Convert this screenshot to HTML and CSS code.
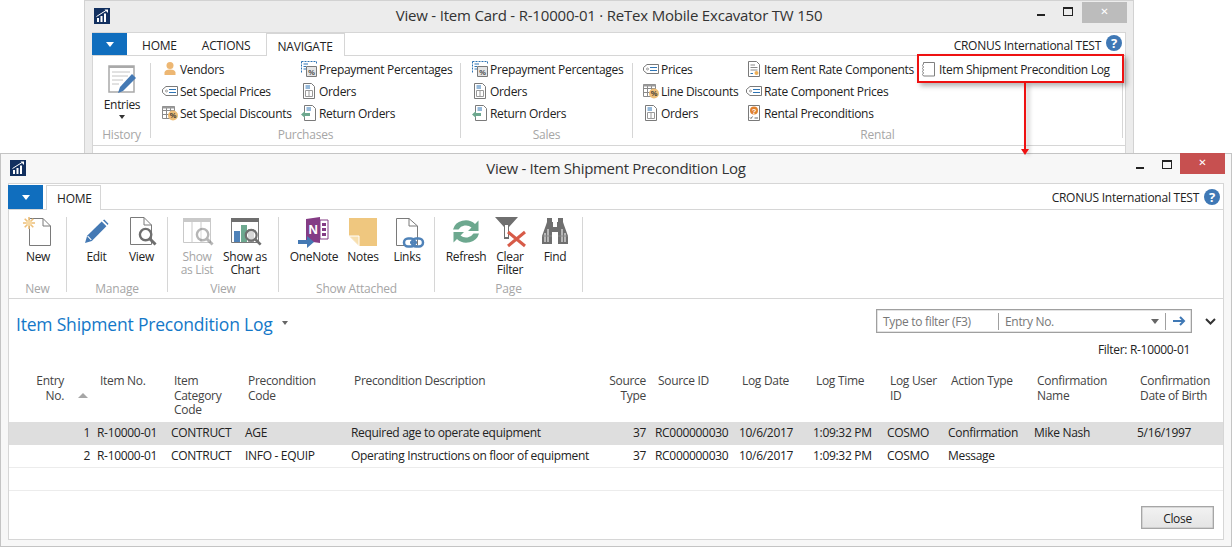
FILE: index.html
```html
<!DOCTYPE html>
<html lang="en">
<head>
<meta charset="utf-8">
<title>View - Item Shipment Precondition Log</title>
<link rel="stylesheet" href="styles.css">
</head>
<body>
<svg class="defs" width="0" height="0" aria-hidden="true">
  <defs>
    <symbol id="logo" viewBox="0 0 16 16"><rect width="16" height="16" fill="#12305f"/><path d="M3 14V10H5V14ZM6.500 14V8H8.500V14ZM10 14V5.500H12V14Z" fill="#fff"/><path d="M2.500 8.500 8 5 12 2.500" fill="none" stroke="#fff" stroke-width="1"/><path d="M10.500 1.500H14V5Z" fill="#fff"/></symbol>
    <symbol id="tag" viewBox="0 0 16 16"><path d="M4 3.500H15.500V12.500H4L.5 9.500V6.500Z" fill="#fff" stroke="#7a7a7a"/><circle cx="4.500" cy="8" r="1" fill="none" stroke="#7a7a7a" stroke-width=".7"/><path d="M7 6.500H14M7 9.500H14" stroke="#2f75b5"/></symbol>
    <symbol id="disc" viewBox="0 0 16 16"><path d="M.5 1.500H12.500V13.500H.5ZM.5 5.500H12.500M.5 9.500H12.500M4.500 1.500V13.500M8.500 1.500V13.500" fill="#fff" stroke="#8a8a8a"/><path d="M.5 1.500H12.500V3.500H.5Z" fill="#9a9a9a"/><circle cx="11" cy="10.500" r="5" fill="#edbe78"/><text x="11" y="13" font-size="7.500" font-weight="700" text-anchor="middle" fill="#333" font-family="Liberation Sans">%</text></symbol>
    <symbol id="prep" viewBox="0 0 16 16"><path d="M.5.500H15.500M.5.500V11.500M15.500.500V3" fill="none" stroke="#2f75b5" stroke-dasharray="2 1"/><path d="M2.500 3H7M2.500 5.500H5M2.500 8H5" stroke="#2f75b5"/><path d="M5.500 5.500H15.500V15.500H5.500Z" fill="#e4e4e4" stroke="#7a7a7a"/><text x="10.500" y="13.500" font-size="7.500" font-weight="700" text-anchor="middle" fill="#444" font-family="Liberation Sans">%</text></symbol>
    <symbol id="order" viewBox="0 0 16 16"><path d="M2.500.5H10.500L13.500 3.500V15.500H2.500Z" fill="#fff" stroke="#7a7a7a"/><path d="M4.500 3H9M4.500 5H9" stroke="#2f75b5"/><path d="M4.500 7.500H11.500V13.500H4.500ZM8 7.500V13.500" fill="none" stroke="#9a9a9a"/></symbol>
    <symbol id="ret" viewBox="0 0 16 16"><path d="M3.500.5H11.500L14.500 3.500V15.500H3.500Z" fill="#fff" stroke="#7a7a7a"/><path d="M5.500 3H10M5.500 5H10" stroke="#2f75b5"/><path d="M0 9.500 4 6V8H9V11H4V13Z" fill="#6da88f"/></symbol>
    <symbol id="rate" viewBox="0 0 16 16"><path d="M2.500.5H10.500L13.500 3.500V15.500H2.500Z" fill="#fff" stroke="#7a7a7a"/><path d="M4.500 4H9M4.500 6.500H11.500M4.500 9H11.500" stroke="#8a8a8a"/><path d="M4.500 12.500H7" stroke="#2f75b5"/><circle cx="10.500" cy="12" r="2" fill="#edb05a"/></symbol>
    <symbol id="rent" viewBox="0 0 16 16"><path d="M2.500.5H13.500V15.500H2.500Z" fill="#fff" stroke="#7a7a7a"/><circle cx="8" cy="5.500" r="4" fill="#e0812e"/><text x="8" y="8.500" font-size="7.500" font-weight="700" text-anchor="middle" fill="#fff" font-family="Liberation Sans">?</text><path d="M4 12.500 5 13.500 6.500 11.500M8.500 13H12" fill="none" stroke="#666"/></symbol>
    <symbol id="log" viewBox="0 0 14 16"><path d="M2.500 1.500H13.500V15H2.500L1.500 13.500 2.500 12 1.500 10.500 2.500 9 1.500 7.500 2.500 6 1.500 4.500 2.500 3Z" fill="#fff" stroke="#808080"/></symbol>
    <symbol id="pencil" viewBox="0 0 24 24"><path d="M1 23 3 16 17 2.500 21.500 7 7.500 21Z" fill="#4479b4"/><path d="M18.200 1.300 19.500.5 23.500 4.500 22.700 5.800Z" fill="#4479b4"/><path d="M3.500 16.500 7 20" stroke="#fff" stroke-width="1"/></symbol>
    <symbol id="lens" viewBox="0 0 20 20"><circle cx="8" cy="8" r="6" fill="#fff" fill-opacity=".55" stroke="#6f6f6f" stroke-width="2.500"/><path d="M12.500 12.500 18.500 18.500" stroke="#6f6f6f" stroke-width="3"/></symbol>
  </defs>
</svg>

<section class="win win-back">
  <header class="title">
    <svg class="logo"><use href="#logo"/></svg>
    <h2 class="title-text">View - Item Card - R-10000-01 · ReTex Mobile Excavator TW 150</h2>
    <div class="ctl">
      <span class="ctl-min"></span><span class="ctl-max"></span><span class="ctl-close ctl-close-off">✕</span>
    </div>
  </header>
  <div class="panel">
    <div class="tabs">
      <span class="menu"><i class="caret-w"></i></span>
      <span class="tab tab-first">HOME</span><span class="tab">ACTIONS</span><span class="tab tab-on">NAVIGATE</span>
      <span class="company">CRONUS International TEST</span><span class="help">?</span>
    </div>
    <div class="ribbon ribbon-back">
      <div class="grp g-history">
        <div class="big entries">
          <svg class="ic-entries" viewBox="0 0 28 30"><path d="M1 1H26V27H1Z" fill="#fff" stroke="#a9a9a9" stroke-width="1.500"/><path d="M1 1H26V3H1Z" fill="#a9a9a9"/><path d="M4 7H22M4 11H20M4 15H15M4 19H11" stroke="#c4c4c4"/><path d="M10 28 12 22 24 9 28 13 15 26Z" fill="#4479b4"/></svg>
          <span>Entries</span><i class="caret-k"></i>
        </div>
        <div class="glabel">History</div>
      </div>
      <div class="grp g-purch">
        <div class="cols">
          <div class="col c-139">
            <div class="li"><svg class="i16" viewBox="0 0 16 16"><circle cx="8" cy="4.500" r="3.500" fill="#edb773"/><path d="M2.500 14V11.500Q3 8.500 8 8.500T13.500 11.500V14Z" fill="#edb773"/></svg><span>Vendors</span></div>
            <div class="li"><svg class="i16"><use href="#tag"/></svg><span>Set Special Prices</span></div>
            <div class="li"><svg class="i16"><use href="#disc"/></svg><span>Set Special Discounts</span></div>
          </div>
          <div class="col">
            <div class="li"><svg class="i16"><use href="#prep"/></svg><span>Prepayment Percentages</span></div>
            <div class="li"><svg class="i16"><use href="#order"/></svg><span>Orders</span></div>
            <div class="li"><svg class="i16"><use href="#ret"/></svg><span>Return Orders</span></div>
          </div>
        </div>
        <div class="glabel">Purchases</div>
      </div>
      <div class="grp g-sales">
        <div class="cols">
          <div class="col">
            <div class="li"><svg class="i16"><use href="#prep"/></svg><span>Prepayment Percentages</span></div>
            <div class="li"><svg class="i16"><use href="#order"/></svg><span>Orders</span></div>
            <div class="li"><svg class="i16"><use href="#ret"/></svg><span>Return Orders</span></div>
          </div>
        </div>
        <div class="glabel">Sales</div>
      </div>
      <div class="grp g-rental">
        <div class="cols">
          <div class="col c-103">
            <div class="li"><svg class="i16"><use href="#tag"/></svg><span>Prices</span></div>
            <div class="li"><svg class="i16"><use href="#disc"/></svg><span>Line Discounts</span></div>
            <div class="li"><svg class="i16"><use href="#order"/></svg><span>Orders</span></div>
          </div>
          <div class="col c-175">
            <div class="li"><svg class="i16"><use href="#rate"/></svg><span>Item Rent Rate Components</span></div>
            <div class="li"><svg class="i16"><use href="#tag"/></svg><span>Rate Component Prices</span></div>
            <div class="li"><svg class="i16"><use href="#rent"/></svg><span>Rental Preconditions</span></div>
          </div>
          <div class="col">
            <div class="li li-log"><svg class="i14"><use href="#log"/></svg><span>Item Shipment Precondition Log</span></div>
          </div>
        </div>
        <div class="glabel">Rental</div>
      </div>
    </div>
  </div>
</section>

<section class="win win-front">
  <header class="title title-front">
    <svg class="logo"><use href="#logo"/></svg>
    <h1 class="title-text">View - Item Shipment Precondition Log</h1>
    <div class="ctl">
      <span class="ctl-min"></span><span class="ctl-max"></span><span class="ctl-close">✕</span>
    </div>
  </header>
  <div class="panel panel-front">
    <div class="tabs tabs-front">
      <span class="menu"><i class="caret-w"></i></span>
      <span class="tab tab-on tab-home">HOME</span>
      <span class="company">CRONUS International TEST</span><span class="help">?</span>
    </div>
    <div class="ribbon ribbon-front">
      <div class="grp f-new">
        <div class="btns">
          <div class="rb w46">
            <svg class="ic" viewBox="0 0 32 30"><path d="M7.500 1.500H21L28.500 9V28.500H7.500Z" fill="#fff" stroke="#7a7a7a" stroke-width="1"/><path d="M21 1.500V9H28.500" fill="none" stroke="#7a7a7a"/><g stroke="#edbe78" stroke-width="1.600"><path d="M7 0V12M1 6H13M2.700 1.700 11.300 10.300M11.300 1.700 2.700 10.300"/></g><circle cx="7" cy="6" r="3" fill="#f6d9a6"/></svg>
            <span>New</span>
          </div>
        </div>
        <div class="glabel">New</div>
      </div>
      <div class="grp f-manage">
        <div class="btns">
          <div class="rb w45"><svg class="ic" viewBox="0 0 32 30"><use href="#pencil" x="3" y="2" width="25" height="25"/></svg><span>Edit</span></div>
          <div class="rb w45"><svg class="ic" viewBox="0 0 32 30"><path d="M4.500 .5H18L25.500 8V27.500H4.500Z" fill="#fff" stroke="#7a7a7a"/><path d="M18 .5V8H25.500" fill="none" stroke="#7a7a7a"/><use href="#lens" x="12" y="10" width="19" height="19"/></svg><span>View</span></div>
        </div>
        <div class="glabel">Manage</div>
      </div>
      <div class="grp f-view">
        <div class="btns">
          <div class="rb w48 off"><svg class="ic" viewBox="0 0 32 30"><path d="M2 1H30V5H2Z" fill="#c9c9c9"/><path d="M2.500 5V25.500H29.500V5M11 5V25.500M20 5V25.500" fill="none" stroke="#c9c9c9"/><g opacity=".5"><use href="#lens" x="14" y="10" width="19" height="19"/></g></svg><span>Show<br>as List</span></div>
          <div class="rb w48"><svg class="ic" viewBox="0 0 32 30"><path d="M2 1H30V5H2Z" fill="#6f6f6f"/><path d="M2.500 5V25.500H29.500V5" fill="none" stroke="#7a7a7a"/><path d="M5 14H11V25H5Z" fill="#4f82b8"/><path d="M12 8H18V25H12Z" fill="#6da88f"/><path d="M19 12H25V25H19Z" fill="#a9a9a9"/><use href="#lens" x="15" y="11" width="18" height="18"/></svg><span>Show as<br>Chart</span></div>
        </div>
        <div class="glabel">View</div>
      </div>
      <div class="grp f-attach">
        <div class="btns">
          <div class="rb w50"><svg class="ic" viewBox="0 0 32 30"><path d="M8 2 22 0V26L8 24Z" fill="#843c85"/><path d="M22 3H30V22H22Z" fill="#fff" stroke="#843c85"/><path d="M24 6H28V9H24ZM24 11H28V14H24ZM24 16H28V19H24Z" fill="#843c85"/><text x="15" y="17" font-size="13" font-weight="700" text-anchor="middle" fill="#fff" font-family="Liberation Sans">N</text><path d="M0 23H9V19L16 25 9 31V27H0Z" fill="#4479b4"/></svg><span>OneNote</span></div>
          <div class="rb w48"><svg class="ic" viewBox="0 0 32 30"><path d="M2 1H30V29H12L2 19Z" fill="#efc77f"/><path d="M2 19H12V29" fill="#fff" stroke="#fff"/><path d="M3 19.500H11.500V28" fill="#f7dfae"/></svg><span>Notes</span></div>
          <div class="rb w40"><svg class="ic" viewBox="0 0 32 30"><path d="M5.500 1.500H18L26.500 9V28.500H5.500Z" fill="#fff" stroke="#7a7a7a"/><path d="M18 1.500V9H26.500" fill="none" stroke="#7a7a7a"/><rect x="13" y="21.500" width="11" height="8" rx="4" fill="#fff" stroke="#4f82b8" stroke-width="2.500"/><rect x="21" y="21.500" width="11" height="8" rx="4" fill="none" stroke="#4f82b8" stroke-width="2.500"/><path d="M19 25.500H26" stroke="#4f82b8" stroke-width="2.500"/></svg><span>Links</span></div>
        </div>
        <div class="glabel">Show Attached</div>
      </div>
      <div class="grp f-page">
        <div class="btns">
          <div class="rb w44"><svg class="ic" viewBox="0 0 32 30"><path d="M3 12.500A13 12 0 0 1 25 7L28.500 3.500V14H18L21.500 10.500A8.500 8 0 0 0 8.500 12.500Z" fill="#6da88f"/><path d="M29 16.500A13 12 0 0 1 7 22L3.500 25.500V15H14L10.500 18.500A8.500 8 0 0 0 23.500 16.500Z" fill="#6da88f"/></svg><span>Refresh</span></div>
          <div class="rb w44"><svg class="ic" viewBox="0 0 32 30"><path d="M1 0H24L15 10V22L10 22V10Z" fill="#6f6f6f"/><path d="M11 8H14V20H11Z" fill="#fff"/><path d="M14 15 31 29M31 15 14 29" stroke="#d75b48" stroke-width="3"/></svg><span>Clear<br>Filter</span></div>
          <div class="rb w46"><svg class="ic" viewBox="0 0 32 30"><path d="M8 1H13V5H14V10H18V5H19V1H24V5L25 8 29 19V27H19V15H13V27H3V19L7 8 8 5Z" fill="#6f6f6f"/><path d="M6 16V25M9 12V25M23 12V25M26 16V25" stroke="#fff"/><path d="M3 19H13M19 19H29" stroke="#8a8a8a"/></svg><span>Find</span></div>
        </div>
        <div class="glabel">Page</div>
      </div>
    </div>
    <div class="body">
      <div class="head-row">
        <div class="heading"><span class="page-title">Item Shipment Precondition Log</span><i class="caret-g"></i></div>
        <div class="filter-wrap">
          <div class="filter">
            <span class="f-type">Type to filter (F3)</span>
            <span class="f-field">Entry No.</span>
            <i class="caret-g caret-f"></i>
            <span class="f-go"><svg width="14" height="10" viewBox="0 0 14 10"><path d="M1 5H12M8 1 12 5 8 9" fill="none" stroke="#3f78b5" stroke-width="2"/></svg></span>
          </div>
          <svg class="chev" width="11" height="7" viewBox="0 0 11 7"><path d="M1 1 5.500 5.500 10 1" fill="none" stroke="#333" stroke-width="2"/></svg>
        </div>
      </div>
      <div class="filter-note">Filter: R-10000-01</div>
      <div class="tbl">
        <div class="row thead">
          <div class="th th-entry">Entry<br>No.<i class="sort"></i></div>
          <div class="th">Item No.</div>
          <div class="th">Item<br>Category<br>Code</div>
          <div class="th">Precondition<br>Code</div>
          <div class="th">Precondition Description</div>
          <div class="th th-r">Source<br>Type</div>
          <div class="th">Source ID</div>
          <div class="th">Log Date</div>
          <div class="th">Log Time</div>
          <div class="th">Log User<br>ID</div>
          <div class="th">Action Type</div>
          <div class="th">Confirmation<br>Name</div>
          <div class="th">Confirmation<br>Date of Birth</div>
        </div>
        <div class="row tr sel">
          <div class="td td-no">1</div><div class="td">R-10000-01</div><div class="td">CONTRUCT</div><div class="td">AGE</div><div class="td">Required age to operate equipment</div><div class="td td-r">37</div><div class="td">RC000000030</div><div class="td">10/6/2017</div><div class="td">1:09:32 PM</div><div class="td">COSMO</div><div class="td">Confirmation</div><div class="td">Mike Nash</div><div class="td">5/16/1997</div>
        </div>
        <div class="row tr">
          <div class="td td-no">2</div><div class="td">R-10000-01</div><div class="td">CONTRUCT</div><div class="td">INFO - EQUIP</div><div class="td">Operating Instructions on floor of equipment</div><div class="td td-r">37</div><div class="td">RC000000030</div><div class="td">10/6/2017</div><div class="td">1:09:32 PM</div><div class="td">COSMO</div><div class="td">Message</div><div class="td"></div><div class="td"></div>
        </div>
        <div class="row tr empty"></div>
      </div>
      <div class="foot"><button class="close" type="button">Close</button></div>
    </div>
  </div>
</section>

<div class="callout"></div>
<div class="arrow"></div>
</body>
</html>
```
FILE: styles.css
```css
* { box-sizing: border-box; }
html, body { margin: 0; padding: 0; }
body {
  position: relative;
  width: 1232px;
  height: 548px;
  overflow: hidden;
  background: #fff;
  color: #222;
  font: 12px/15px "Open Sans", "Noto Sans", sans-serif;
  letter-spacing: -.31px;
}
.defs { position: absolute; }
h1, h2 { margin: 0; font-weight: 400; }
i { display: block; }
svg { display: block; flex: none; overflow: visible; }

/* windows */
.win { position: absolute; display: flex; flex-direction: column; }
.win-back { left: 84px; top: 0; width: 1050px; height: 153px; background: #ececec; border: 1px solid #d2d2d2; border-bottom: 0; padding: 0 7px; }
.win-front { left: 0; top: 153px; width: 1232px; height: 394px; background: #f7f7f7; border: 1px solid #c4c4c4; padding: 0 7px 6px; }

.title { position: relative; flex: none; height: 31px; display: flex; align-items: center; justify-content: center; }
.title-front { height: 29px; }
.title-text { font-size: 15px; letter-spacing: -.2px; color: #333; margin-top: -2px; }
.win-front .title-text { letter-spacing: -.3px; margin-top: 0; }
.logo { position: absolute; left: 2px; top: 7px; width: 16px; height: 16px; }
.title-front .logo { top: 6px; }
.ctl { position: absolute; right: -1px; top: 0; display: flex; align-items: flex-start; }
.ctl-min { width: 8px; height: 2px; background: #222; margin: 13px 18px 0 0; }
.ctl-max { width: 10px; height: 9px; border: 1px solid #222; border-top-width: 2px; margin: 6px 8px 0 0; }
.ctl-close { width: 45px; height: 21px; background: #c75050; color: #fff; font-size: 10px; line-height: 20px; text-align: center; font-family: "DejaVu Sans", sans-serif; margin-top: -1px; letter-spacing: 0; }
.ctl-close-off { background: #bcbcbc; margin-top: 1px; }
.win-back .ctl-max { margin-right: 9px; }
.win-back .ctl { right: -1px; }

/* panel */
.panel { flex: 1; min-height: 0; background: #fff; border: 1px solid #d6d6d6; border-bottom-width: 0; display: flex; flex-direction: column; }
.panel-front { border-bottom-width: 1px; }

.tabs { flex: none; height: 23px; display: flex; align-items: stretch; border-bottom: 1px solid #d6d6d6; position: relative; }
.tabs-front { height: 26px; padding-top: 1px; }
.menu { width: 35px; background: #106ebe; display: flex; align-items: center; justify-content: center; margin-left: -1px; }
.caret-w { width: 0; height: 0; border: 4px solid transparent; border-top: 5px solid #fff; border-bottom: 0; }
.tab { padding: 5px 0 0; color: #222; margin-left: 25px; letter-spacing: -.2px; }
.tab-first { margin-left: 15px; }
.tab-on { margin: 0 0 -1px 15px; padding: 5px 11px 0; background: #fff; border: 1px solid #d6d6d6; border-bottom: 0; }
.tab-home { margin-left: 3px; padding: 5px 8px 0 10px; }
.company { margin-left: auto; padding-top: 5px; margin-right: 5px; letter-spacing: -.25px; }
.help { width: 16px; height: 16px; border-radius: 50%; background: #3f78b5; color: #fff; font: 700 13px/16px "Open Sans", sans-serif; letter-spacing: 0; text-align: center; margin: 2px 3px 0 0; }
.tabs-front .help { margin-top: 4px; }
.tabs-front .tab, .tabs-front .company { padding-top: 5px; }

/* ribbon */
.ribbon { display: flex; flex: none; color: #222; }
.ribbon-back { padding: 7px 0 0; height: 90px; border-bottom: 1px solid #d6d6d6; }
.ribbon-front { padding: 7px 0 0; height: 89px; border-bottom: 1px solid #d6d6d6; }
.grp { display: flex; flex-direction: column; flex: none; height: 75px; border-right: 1px solid #d6d6d6; }
.glabel { margin-top: auto; text-align: center; color: #a6a6a6; line-height: 14px; letter-spacing: -.2px; margin-bottom: -4px; }

.g-history { width: 58px; }
.g-purch { width: 310px; }
.g-sales { width: 172px; }
.g-rental { width: 490px; }
.cols { display: flex; height: 66px; margin-top: -5px; }
.g-purch .cols { padding-left: 11px; }
.g-sales .cols { padding-left: 11px; }
.g-rental .cols { padding-left: 10px; }
.col { display: flex; flex-direction: column; }
.c-139 { width: 139px; }
.c-103 { width: 103px; }
.c-175 { width: 175px; }
.li { height: 22px; display: flex; align-items: center; gap: 2px; white-space: nowrap; }
.li-log { gap: 4px; }
.i16 { width: 16px; height: 16px; }
.i14 { width: 14px; height: 16px; }

.big { width: 58px; margin-top: 2px; display: flex; flex-direction: column; align-items: center; text-align: center; }
.ic-entries { width: 28px; height: 30px; margin-bottom: 2px; }
.caret-k { width: 0; height: 0; border: 3px solid transparent; border-top: 4px solid #333; border-bottom: 0; margin-top: 3px; }

.f-new { width: 58px; }
.f-manage { width: 101px; }
.f-view { width: 111px; }
.f-attach { width: 156px; }
.f-page { width: 148px; }
.btns { display: flex; height: 60px; }
.f-new .btns { padding-left: 6px; }
.f-manage .btns { padding-left: 7px; }
.f-view .btns { padding-left: 5px; }
.f-attach .btns { padding-left: 10px; }
.f-page .btns { padding-left: 9px; }
.rb { display: flex; flex-direction: column; align-items: center; text-align: center; line-height: 13px; white-space: nowrap; }
.rb span { margin-top: 3px; }
.ic { width: 32px; height: 30px; }
.w40 { width: 40px; } .w44 { width: 44px; } .w45 { width: 45px; } .w46 { width: 46px; } .w48 { width: 48px; } .w50 { width: 50px; }
.off { color: #a6a6a6; }

/* body */
.body { flex: 1; min-height: 0; display: flex; flex-direction: column; padding-top: 10px; }
.head-row { display: flex; justify-content: space-between; align-items: flex-start; height: 26px; }
.heading { display: flex; align-items: center; padding: 3px 0 0 7px; }
.page-title { font-size: 17.500px; line-height: 24px; color: #1478c8; letter-spacing: -.2px; }
.caret-g { width: 0; height: 0; border: 3.500px solid transparent; border-top: 4px solid #666; border-bottom: 0; margin-left: 9px; margin-top: -3px; }
.filter-wrap { display: flex; align-items: center; }
.filter { width: 316px; height: 24px; border: 1px solid #a0a0a0; box-shadow: inset 0 0 0 .5px #c8c8c8; display: flex; align-items: center; color: #777; }
.f-type { width: 122px; padding-left: 6px; border-right: 1px solid #a0a0a0; line-height: 17px; }
.f-field { flex: 1; padding-left: 6px; }
.caret-f { margin: 0 6px 0 0; border-width: 4px; border-top-width: 5px; border-bottom: 0; }
.f-go { width: 26px; height: 17px; border-left: 1px solid #a0a0a0; display: flex; align-items: center; justify-content: center; }
.chev { margin: 0 7px 0 13px; }
.filter-note { text-align: right; padding-right: 33px; margin-top: 7px; height: 29px; }

.tbl { flex: none; }
.row { display: grid; grid-template-columns: 85px 74px 74px 106px 252px 52px 84px 74px 74px 61px 86px 103px 89px; }
.thead { height: 51px; padding-top: 3px; color: #444; }
.th { padding-left: 6px; line-height: 14.700px; white-space: nowrap; }
.th-entry { position: relative; text-align: right; padding: 0 30px 0 0; }
.th-r { text-align: right; padding: 0 6px 0 0; }
.sort { position: absolute; left: 69px; top: 19px; width: 0; height: 0; border: 5px solid transparent; border-top: 0; border-bottom: 5px solid #a6a6a6; }
.tr { height: 22.500px; border-bottom: 1px solid #ececec; }
.sel { background: #dedede; border-bottom: 0; height: 23px; }
.td { padding-left: 3px; line-height: 21px; white-space: nowrap; color: #222; }
.td-no, .td-r { text-align: right; padding: 0 4px 0 0; }
.td-r { padding-right: 6px; }
.empty { display: block; height: 23px; }

.foot { margin-top: auto; display: flex; justify-content: flex-end; padding: 0 9px 10px 0; }
.close { width: 73px; height: 23px; padding: 2px 0 0; border: 1px solid #a6a6a6; background: linear-gradient(#f2f2f2, #e4e4e4); box-shadow: inset 0 0 0 .5px #bbb; font: inherit; letter-spacing: inherit; color: #222; }

/* annotation overlay */
.callout { position: absolute; left: 917px; top: 54px; width: 207px; height: 29px; border: 2px solid #ee1111; box-shadow: 3px 3px 5px rgba(0,0,0,.3); }
.arrow { position: absolute; left: 1024px; top: 83px; width: 2px; height: 70px; background: #ee1111; box-shadow: 3px 2px 4px rgba(0,0,0,.3); }
.arrow::after { content: ""; position: absolute; left: -3px; bottom: -2px; border: 4px solid transparent; border-top: 6px solid #ee1111; border-bottom: 0; }
```
